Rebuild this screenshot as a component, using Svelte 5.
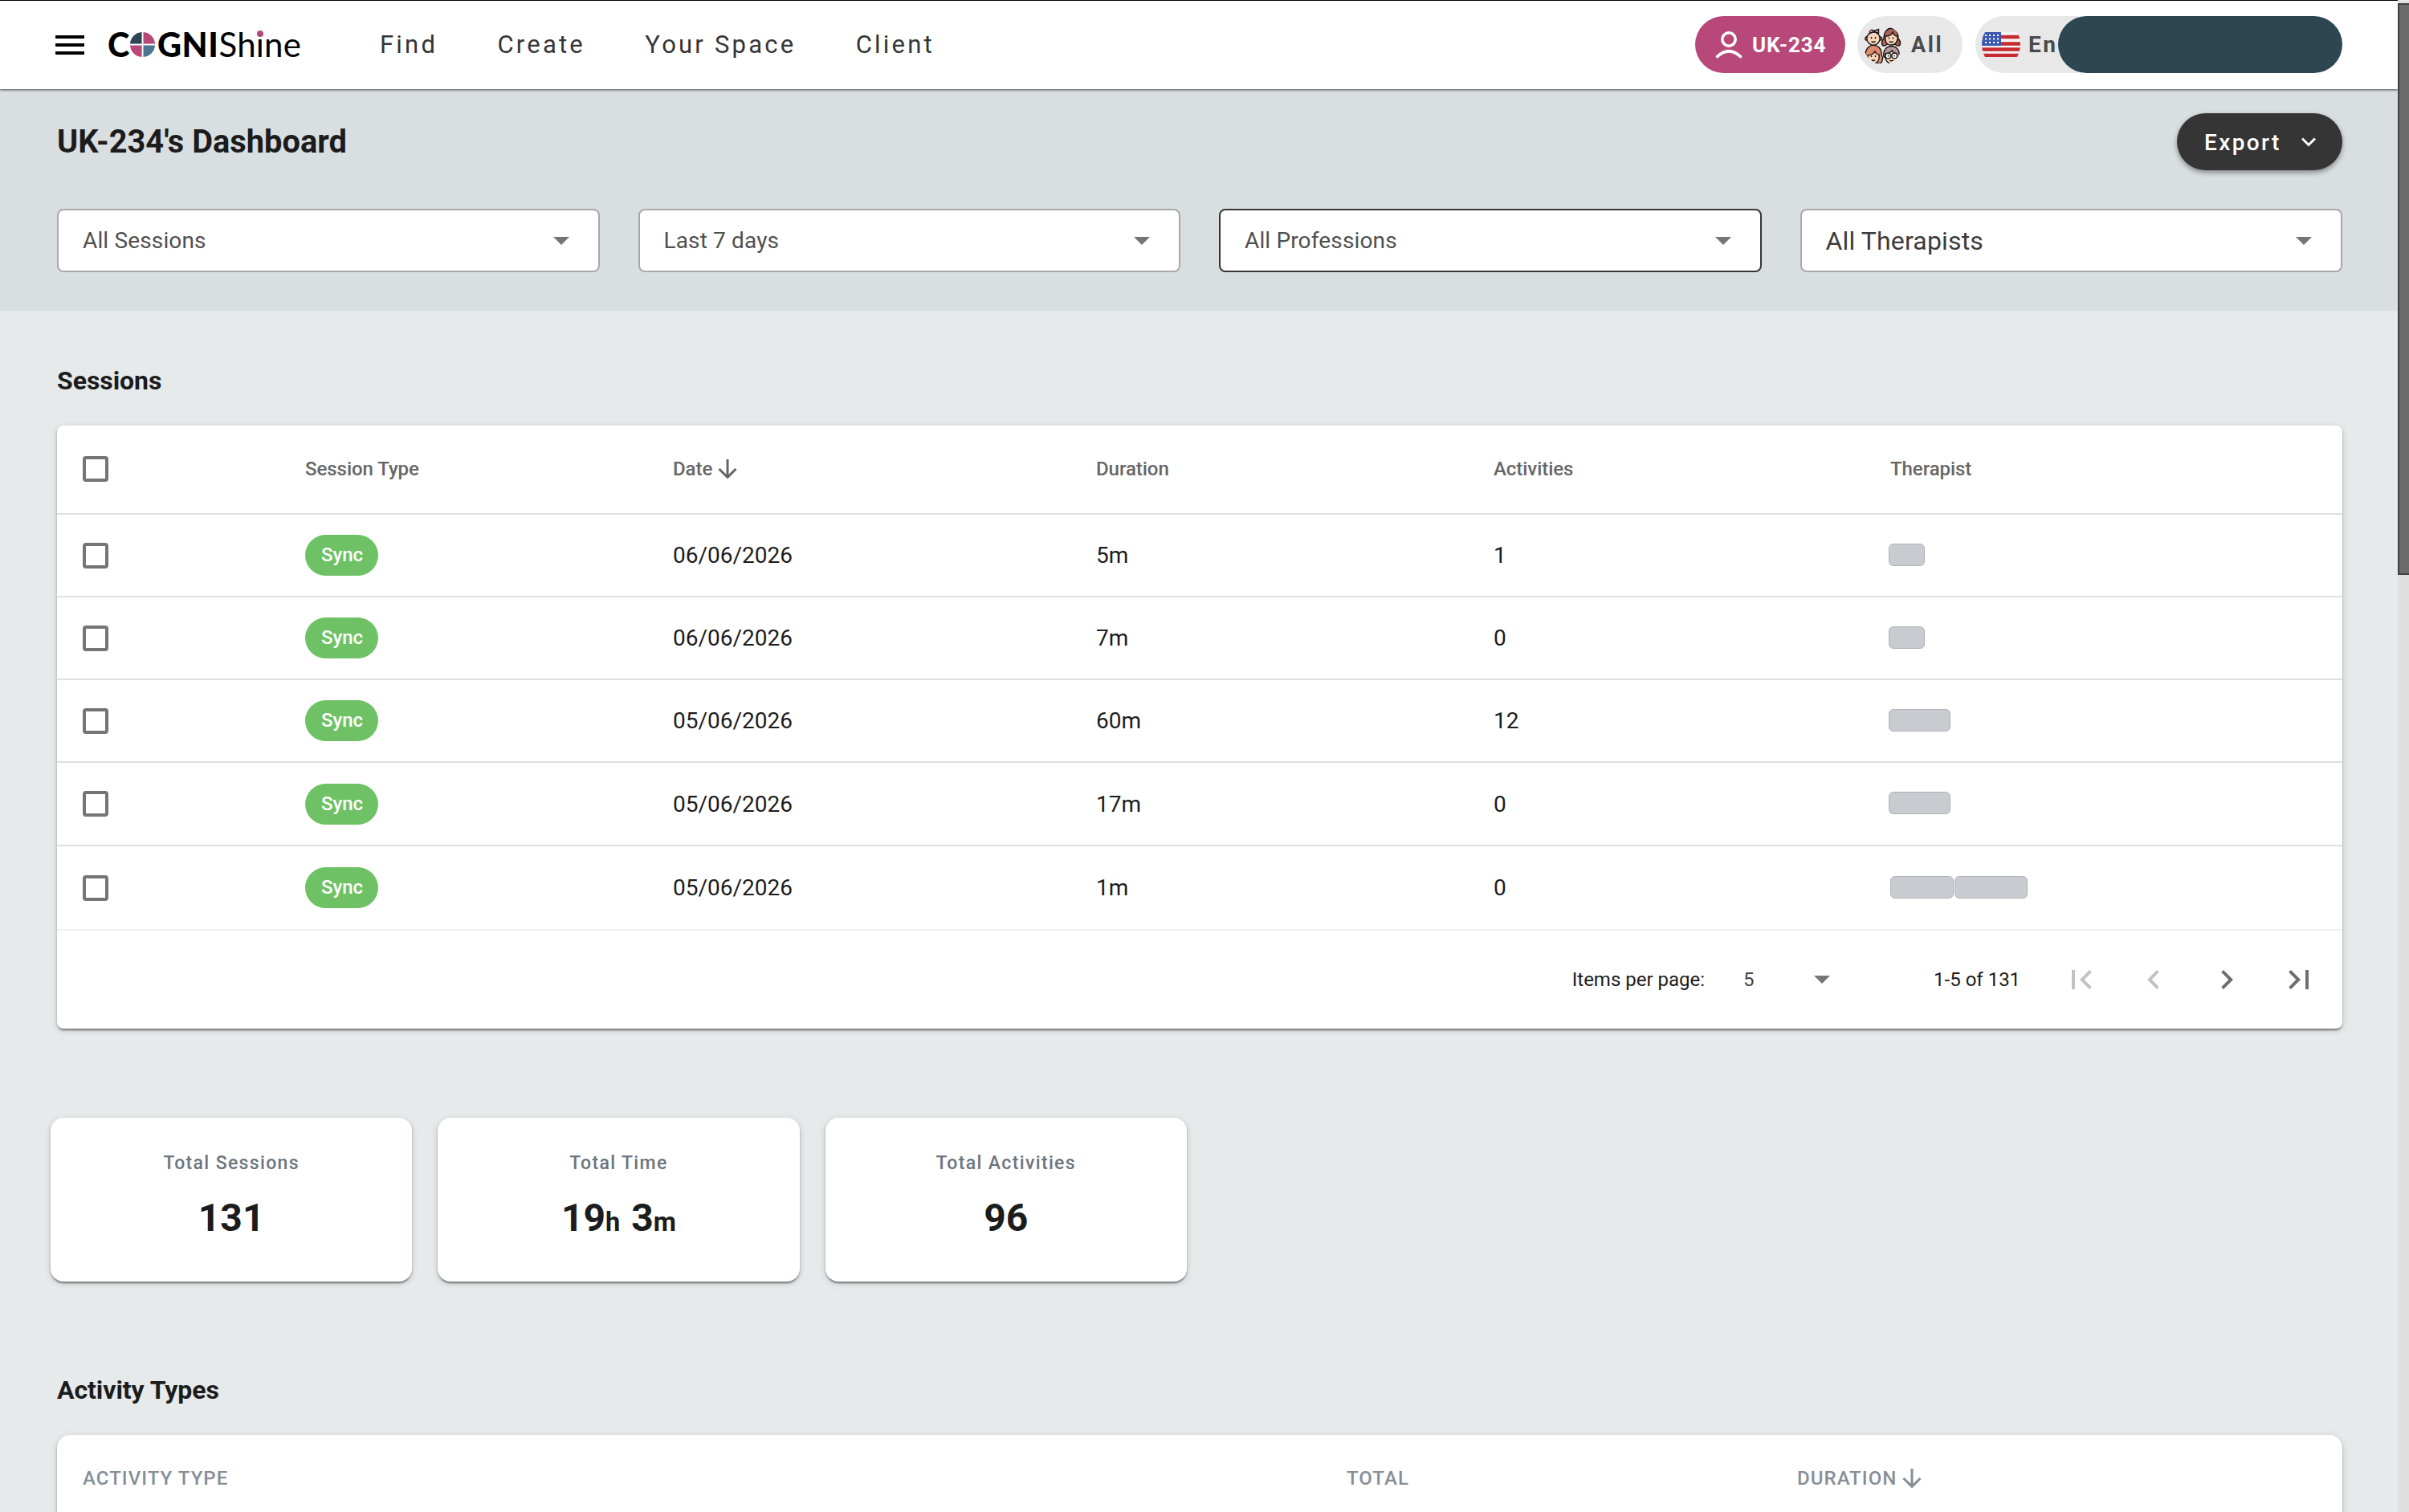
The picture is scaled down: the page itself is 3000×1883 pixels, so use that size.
<script lang="ts">
	interface Session {
		date: string;
		duration: string;
		activities: number;
		redacted: number[];
	}

	const navItems = ['Find', 'Create', 'Your Space', 'Client'];

	const filters = [
		{ label: 'All Sessions' },
		{ label: 'Last 7 days' },
		{ label: 'All Professions', active: true },
		{ label: 'All Therapists', large: true }
	];

	const sessions: Session[] = [
		{ date: '06/06/2026', duration: '5m', activities: 1, redacted: [45] },
		{ date: '06/06/2026', duration: '7m', activities: 0, redacted: [45] },
		{ date: '05/06/2026', duration: '60m', activities: 12, redacted: [77] },
		{ date: '05/06/2026', duration: '17m', activities: 0, redacted: [77] },
		{ date: '05/06/2026', duration: '1m', activities: 0, redacted: [79, 91] }
	];

	const stats = [
		{ label: 'Total Sessions', parts: [['131', '']] },
		{ label: 'Total Time', parts: [['19', 'h'], ['3', 'm']] },
		{ label: 'Total Activities', parts: [['96', '']] }
	];
</script>

{#snippet sortArrow()}
	<svg class="sort-arrow" viewBox="0 0 24 24" fill="none" stroke="currentColor" stroke-width="3">
		<path d="M12 0v22M1.5 12 12 22.4 22.5 12" />
	</svg>
{/snippet}

<div class="page">
	<header class="topbar">
		<button class="menu" aria-label="Menu"><span></span><span></span><span></span></button>
		<div class="logo">
			<span class="heavy">C</span>
			<svg class="logo-o" viewBox="0 0 32 32">
				<path fill="#2e4653" d="M15 15V0A16 16 0 0 0 0 15z" />
				<path fill="#b84879" d="M17 15V0a16 16 0 0 1 15 15z" />
				<path fill="#b84879" d="M15 17v15A16 16 0 0 1 0 17z" />
				<path fill="#4b768d" d="M17 17v15a16 16 0 0 0 15-15z" />
			</svg>
			<span class="heavy">GNI</span><span class="light">Sh<span class="dotted">i</span>ne</span>
		</div>
		<nav>
			{#each navItems as item}
				<a href="#top">{item}</a>
			{/each}
		</nav>
		<div class="pills">
			<div class="pill user">
				<svg viewBox="0 0 34 34" fill="none" stroke="#fff" stroke-width="3.6" stroke-linecap="round">
					<circle cx="17" cy="10" r="8.2" />
					<path d="M2.500 31.500Q17 18 31.500 31.500" />
				</svg>
				<span>UK-234</span>
			</div>
			<div class="pill all">
				<svg viewBox="0 0 46 46" stroke="#171313" stroke-width="1.4">
					<defs>
						<clipPath id="family"><circle cx="22.500" cy="23" r="24" /></clipPath>
					</defs>
					<g clip-path="url(#family)">
						<!-- hair -->
						<path d="M23 24c-3-2-1-7 1-9C24-2 42-2 42 15c2 2 4 7 1 9-3 0-5-1-6-3h-8c-1 2-3 3-6 3z" fill="#a96458" />
						<path d="M1 38c-2-19 21-19 20-3 3 5 1 11-3 11H5z" fill="#df8a70" />
						<path d="M24 38c-3-18 22-18 19 0z" fill="#b59b98" />
						<!-- faces -->
						<circle cx="2.500" cy="15" r="2" fill="#f7d3b8" />
						<circle cx="19.500" cy="15" r="2" fill="#f7d3b8" />
						<circle cx="11" cy="15" r="8.200" fill="#f7d3b8" />
						<path d="M26 12c6 0 8-2 9-5 1 3 3 5 6 5 1 6-2 11-8 11s-8-5-7-11z" fill="#f7d3b8" />
						<path d="M4 36c6-1 8-3 9-5 1 2 3 4 5 4 1 7-2 11-7 11s-8-4-7-10z" fill="#f7d3b8" />
						<path d="M26 34c5-1 7-2 8-4 1 2 3 3 6 4 1 7-2 12-7 12s-8-5-7-12z" fill="#f7d3b8" />
						<path d="M6.500 3.500 12 5.500l5.500-2v5L12 6.500l-5.500 2z" fill="#ef8fd0" />
						<circle cx="29.300" cy="36.500" r="3.400" fill="#fff" />
						<circle cx="37.200" cy="36.500" r="3.400" fill="#fff" />
						<path d="M8.500 13v2M13.500 13v2M30.500 13.500v2M35.500 13.500v2M8.500 36v2M13.500 36v2M29.500 35.500v2M37 35.500v2" />
						<path d="M8.500 18.500q2.500 2 5 0M30.500 18.500q2.500 2 5 0M9 41.500q2 2 4 0M31 42q2.500 1.500 5 0" fill="none" />
					</g>
				</svg>
				<span>All</span>
			</div>
			<div class="pill lang">
				<svg viewBox="0 0 48 31">
					<defs>
						<clipPath id="flag"><path d="M4 0h40q4 7 4 15.500T44 31H4Q0 24 0 15.500T4 0z" /></clipPath>
					</defs>
					<g clip-path="url(#flag)">
						<rect width="48" height="31" fill="#f5f5f5" />
						<path stroke="#c92a30" stroke-width="4.300" d="M0 6h48M0 14.500h48M0 21.500h48M0 29h48" />
						<rect width="24" height="17" fill="#3d58ae" />
						<path stroke="#fff" stroke-width="2" stroke-dasharray="2 3" d="M4 4h19M4 8.500h19M4 13h19" />
					</g>
				</svg>
				<span>En</span>
			</div>
			<div class="account"></div>
		</div>
	</header>

	<section class="controls">
		<div class="title-row">
			<h1>UK-234's Dashboard</h1>
			<button class="export">
				<span>Export</span>
				<svg viewBox="0 0 18 12" fill="none" stroke="#fff" stroke-width="3"><path d="M1 1.500l8 8 8-8" /></svg>
			</button>
		</div>
		<div class="filters">
			{#each filters as filter}
				<div class="select" class:active={filter.active} class:large={filter.large}>
					<span>{filter.label}</span>
					<i class="caret"></i>
				</div>
			{/each}
		</div>
	</section>

	<main>
		<h2>Sessions</h2>
		<div class="card table">
			<div class="row head">
				<div><i class="checkbox"></i></div>
				<div>Session Type</div>
				<div>Date {@render sortArrow()}</div>
				<div>Duration</div>
				<div>Activities</div>
				<div>Therapist</div>
			</div>
			{#each sessions as session}
				<div class="row">
					<div><i class="checkbox"></i></div>
					<div><span class="sync">Sync</span></div>
					<div>{session.date}</div>
					<div>{session.duration}</div>
					<div>{session.activities}</div>
					<div class="therapist" class:double={session.redacted.length > 1}>
						{#each session.redacted as width}
							<i style="width: {width}px"></i>
						{/each}
					</div>
				</div>
			{/each}
			<div class="paginator">
				<span>Items per page:</span>
				<span class="size">5</span>
				<i class="caret"></i>
				<span class="range">1-5 of 131</span>
				<div class="pager">
					<svg class="off" viewBox="0 0 48 48"><path d="M36.820 33.180L27.640 24l9.180-9.180L34 12 22 24l12 12zM12 12h4v24h-4z" /></svg>
					<svg class="off" viewBox="0 0 48 48"><path d="M30.820 14.820L28 12 16 24l12 12 2.820-2.820L21.660 24z" /></svg>
					<svg viewBox="0 0 48 48"><path d="M20 12l-2.820 2.820L26.340 24l-9.160 9.180L20 36l12-12z" /></svg>
					<svg viewBox="0 0 48 48"><path d="M11.180 14.820L20.360 24l-9.180 9.180L14 36l12-12-12-12zM32 12h4v24h-4z" /></svg>
				</div>
			</div>
		</div>

		<div class="stats">
			{#each stats as stat}
				<div class="card stat">
					<span class="label">{stat.label}</span>
					<div class="value">
						{#each stat.parts as [amount, unit]}
							<span>{amount}<small>{unit}</small></span>
						{/each}
					</div>
				</div>
			{/each}
		</div>

		<h2>Activity Types</h2>
		<div class="card activity">
			<span>ACTIVITY TYPE</span>
			<span>TOTAL</span>
			<span>DURATION {@render sortArrow()}</span>
		</div>
	</main>

	<div class="scrollbar"><div class="thumb"></div></div>
</div>

<style>
	:global(body) {
		background: #e6eaeb;
	}

	.page {
		position: relative;
		box-sizing: border-box;
		width: 3000px;
		height: 1883px;
		overflow: hidden;
		padding-right: 14px;
		background: #e6eaeb;
		color: #1c1c1c;
		font-family: Roboto, 'Liberation Sans', sans-serif;
		font-size: 28px;
	}

	.page * {
		box-sizing: border-box;
	}

	button {
		border: 0;
		font: inherit;
	}

	/* Top bar */
	.topbar {
		position: relative;
		z-index: 1;
		display: flex;
		align-items: center;
		height: 111px;
		padding: 0 69px 1px;
		border-top: 1px solid #000;
		background: #fff;
		box-shadow: 0 1px 3px rgba(0, 0, 0, 0.7);
	}

	.menu {
		display: flex;
		flex-direction: column;
		gap: 6px;
		width: 36px;
		padding: 0;
		background: none;
	}

	.menu span {
		height: 4px;
		background: #000;
	}

	.logo {
		display: flex;
		align-items: center;
		width: 242px;
		margin-left: 29px;
		color: #000;
		font-family: Lato, sans-serif;
		font-size: 41.500px;
		line-height: 48px;
		white-space: nowrap;
	}

	.heavy {
		padding-bottom: 2px;
		font-weight: 900;
		letter-spacing: 0.600px;
	}

	.light {
		padding-bottom: 2px;
		font-size: 42px;
		letter-spacing: 0.200px;
	}

	.logo-o {
		flex: none;
		width: 31px;
		height: 31px;
		margin: 0 3px 0 0;
	}

	.dotted {
		position: relative;
	}

	.dotted::after {
		content: '';
		position: absolute;
		top: 8px;
		left: 1px;
		width: 8px;
		height: 8px;
		border-radius: 50%;
		background: #b84879;
	}

	nav {
		display: flex;
		gap: 74.400px;
		margin-left: 97px;
	}

	nav a {
		color: #353535;
		font-size: 31px;
		letter-spacing: 3.200px;
		text-decoration: none;
	}

	.pills {
		display: flex;
		align-items: center;
		margin-left: auto;
	}

	.pill {
		display: flex;
		align-items: center;
		height: 71px;
		border-radius: 36px;
		background: #e8e8e8;
		color: #4a4a4a;
		font-size: 27px;
		font-weight: 700;
		letter-spacing: 2.600px;
	}

	.user {
		width: 187px;
		margin-right: 15px;
		padding-left: 25px;
		background: #b84879;
		color: #fff;
		font-size: 26px;
		letter-spacing: 0.900px;
	}

	.user svg {
		width: 34px;
		height: 34px;
		margin-right: 12px;
	}

	.all {
		width: 131px;
		margin-right: 16px;
		padding-left: 9px;
	}

	.all svg {
		width: 46px;
		height: 46px;
		margin-right: 12px;
	}

	.lang {
		width: 160px;
		padding-left: 8px;
		font-size: 28px;
	}

	.lang svg {
		width: 48px;
		height: 31px;
		margin-right: 10px;
	}

	.account {
		z-index: 1;
		width: 354px;
		height: 71px;
		margin-left: -57px;
		border-radius: 36px;
		background: #2e4652;
	}

	/* Dashboard controls */
	.controls {
		height: 276px;
		padding: 30px 69px 0 71px;
		background: #d9dfe1;
	}

	.title-row {
		display: flex;
		align-items: center;
		justify-content: space-between;
		height: 71px;
	}

	h1,
	h2 {
		margin: 0;
		font-weight: 700;
	}

	h1 {
		padding-bottom: 1px;
		font-size: 39.800px;
	}

	.export {
		display: flex;
		align-items: center;
		justify-content: space-between;
		width: 206px;
		height: 71px;
		padding: 0 33px 0 34px;
		border-radius: 36px;
		background: #353535;
		color: #fff;
		font-size: 28px;
		font-weight: 500;
		letter-spacing: 2.400px;
		box-shadow: 0 3px 6px rgba(0, 0, 0, 0.4);
	}

	.export span {
		padding-top: 1px;
	}

	.export svg {
		width: 18px;
		height: 12px;
	}

	.filters {
		display: grid;
		grid-template-columns: repeat(4, 1fr);
		gap: 48px;
		margin-top: 48px;
	}

	.select {
		display: flex;
		align-items: center;
		justify-content: space-between;
		height: 79px;
		padding: 0 36px 0 30px;
		border: 2px solid #a8a8a8;
		border-radius: 8px;
		background: #fff;
		color: #505050;
		font-size: 28px;
		letter-spacing: 0.150px;
	}

	.select.active {
		border-color: #353535;
	}

	.select.large {
		color: #3c3c3c;
		font-size: 32px;
	}

	.caret {
		width: 0;
		height: 0;
		border: 10px solid transparent;
		border-top-color: #757575;
		border-bottom: 0;
	}

	/* Sessions */
	main {
		padding: 68px 69px 0 71px;
	}

	h2 {
		height: 38px;
		font-size: 32px;
		letter-spacing: -0.050px;
		line-height: 38px;
	}

	.card {
		border-radius: 8px;
		background: #fff;
		box-shadow:
			0 4px 2px -2px rgba(0, 0, 0, 0.25),
			0 2px 3px rgba(0, 0, 0, 0.25),
			0 2px 8px rgba(0, 0, 0, 0.14);
	}

	.table {
		height: 751px;
		margin-top: 37px;
	}

	.row {
		display: grid;
		grid-template-columns: 277px 458px 527px 495px 494px 1fr;
		align-items: center;
		height: 103px;
		padding-left: 32px;
		border-bottom: 2px solid #e0e0e0;
	}

	.row:nth-child(5) {
		height: 104px;
	}

	.row:nth-child(6) {
		height: 105px;
		border-bottom-color: #f0f0f0;
	}

	.row > div {
		display: flex;
		align-items: center;
	}

	.row.head {
		height: 111px;
		padding-bottom: 1px;
		color: #666;
		font-size: 24px;
		font-weight: 500;
		letter-spacing: -0.050px;
	}

	.checkbox {
		width: 32px;
		height: 32px;
		border: 4px solid #757575;
		border-radius: 4px;
	}

	.sort-arrow {
		width: 24px;
		height: 24px;
		margin-left: 7px;
	}

	.sync {
		width: 91px;
		height: 51px;
		padding-left: 1px;
		border-radius: 26px;
		background: #6ec265;
		color: #fff;
		font-size: 24px;
		font-weight: 500;
		line-height: 51px;
		text-align: center;
	}

	.row > .therapist {
		gap: 1px;
		margin-left: -2px;
		padding-bottom: 2px;
	}

	.row > .double {
		margin-left: 0;
	}

	.therapist i {
		height: 28px;
		border: 1px solid #afb2b6;
		border-radius: 6px;
		background: #c8cbd0;
	}

	.paginator {
		display: flex;
		align-items: center;
		justify-content: flex-end;
		height: 122px;
		padding-right: 30px;
		font-size: 24px;
	}

	.size {
		width: 88px;
		margin-left: 48px;
		color: #444;
	}

	.range {
		margin-left: 129px;
	}

	.pager {
		display: flex;
		gap: 42.300px;
		margin-left: 52px;
	}

	.pager svg {
		width: 48px;
		height: 48px;
		fill: #6e6e6e;
	}

	.pager .off {
		fill: #c2c2c2;
	}

	/* Totals */
	.stats {
		display: grid;
		grid-template-columns: repeat(3, 450.300px);
		gap: 32px;
		margin: 111px 0 116px -8px;
	}

	.stat {
		display: flex;
		flex-direction: column;
		align-items: center;
		height: 204px;
		padding-top: 43px;
		border-radius: 16px;
	}

	.label {
		color: #6c757d;
		font-size: 23px;
		font-weight: 500;
		letter-spacing: 1.350px;
		line-height: 28px;
	}

	.value {
		display: flex;
		gap: 14px;
		margin-top: 26px;
		font-size: 48px;
		font-weight: 700;
		line-height: 56px;
	}

	.value small {
		font-size: 32.500px;
	}

	/* Activity types */
	.activity {
		display: grid;
		grid-template-columns: 1574px 561px 1fr;
		align-items: center;
		height: 150px;
		margin-top: 37px;
		padding: 0 32px 42px;
		border-radius: 16px;
		color: #868e96;
		font-size: 24px;
		font-weight: 500;
		letter-spacing: 1.050px;
	}

	.activity span {
		display: flex;
		align-items: center;
	}

	/* Scrollbar */
	.scrollbar {
		position: absolute;
		z-index: 2;
		top: 1px;
		right: 0;
		width: 14px;
		height: 1882px;
		padding-top: 3px;
		background: #dfdfdf;
	}

	.thumb {
		height: 712px;
		border: 2px solid #424242;
		border-right: 0;
		background: #6b6b6b;
	}
</style>
